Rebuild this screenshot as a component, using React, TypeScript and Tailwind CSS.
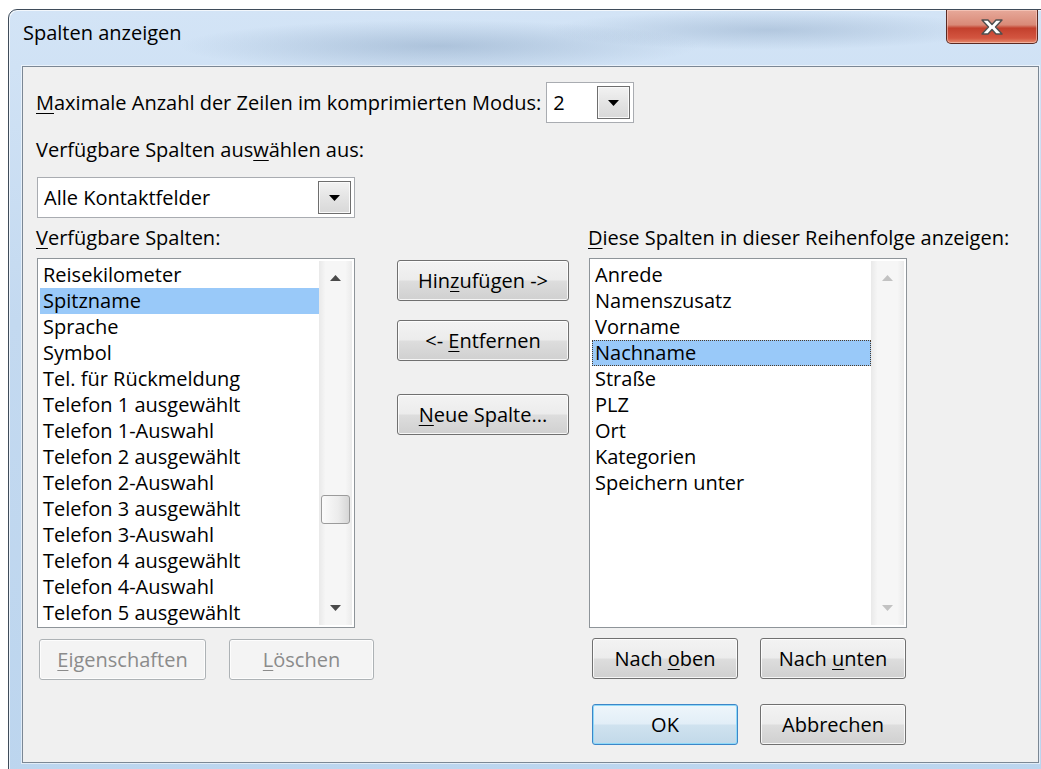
import type { ReactNode } from "react";

const availableColumns = [
  "Reisekilometer",
  "Spitzname",
  "Sprache",
  "Symbol",
  "Tel. für Rückmeldung",
  "Telefon 1 ausgewählt",
  "Telefon 1-Auswahl",
  "Telefon 2 ausgewählt",
  "Telefon 2-Auswahl",
  "Telefon 3 ausgewählt",
  "Telefon 3-Auswahl",
  "Telefon 4 ausgewählt",
  "Telefon 4-Auswahl",
  "Telefon 5 ausgewählt",
];

const shownColumns = [
  "Anrede",
  "Namenszusatz",
  "Vorname",
  "Nachname",
  "Straße",
  "PLZ",
  "Ort",
  "Kategorien",
  "Speichern unter",
];

// underlined access key letter
const Key = ({ children }: { children: ReactNode }) => (
  <span className="underline decoration-1 underline-offset-[3px]">{children}</span>
);

const Arrow = ({ down, color }: { down?: boolean; color: string }) => (
  <svg width="11" height="6" viewBox="0 0 11 6">
    <path d={down ? "M0 0 L11 0 L5.5 6 Z" : "M0 6 L5.5 0 L11 6 Z"} fill={color} />
  </svg>
);

type ButtonProps = {
  children: ReactNode;
  width: string;
  disabled?: boolean;
  isDefault?: boolean;
};

const DialogButton = ({ children, width, disabled, isDefault }: ButtonProps) => {
  let look =
    "border-[#707070] bg-[linear-gradient(180deg,#f3f3f3_0%,#ececec_48%,#dddddd_52%,#d0d0d0_100%)] text-black";
  if (disabled) look = "border-[#adb2b5] bg-[#f4f4f4] text-[#8b8b8b]";
  if (isDefault)
    look =
      "border-[#3c86c8] bg-[linear-gradient(180deg,#eef6fb_0%,#e2eef7_48%,#cfe2ef_52%,#c2d9e9_100%)] text-black";
  return (
    <button
      type="button"
      className={`h-[41px] ${width} ${look} flex items-center justify-center rounded-[3px] border leading-6 ${
        isDefault ? "shadow-[inset_0_0_0_1px_#8fd9f8]" : "shadow-[inset_0_0_0_1px_rgba(255,255,255,0.8)]"
      }`}
    >
      {children}
    </button>
  );
};

const ComboBox = ({ value, width }: { value: string; width: string }) => (
  <div className={`flex h-[41px] ${width} items-center justify-between border border-[#a9acb1] bg-white pl-[6px] pr-[3px]`}>
    <span className="leading-6">{value}</span>
    <span className="flex h-[33px] w-[33px] items-center justify-center border border-[#6e6e6e] bg-[linear-gradient(180deg,#f2f2f2_0%,#e4e4e4_50%,#d8d8d8_100%)] shadow-[inset_0_0_0_1px_#fafafa]">
      <Arrow down color="#000" />
    </span>
  </div>
);

const ScrollBar = ({ active }: { active?: boolean }) => {
  const arrowColor = active ? "#4a4a4a" : "#c2c2c2";
  return (
    <div className="flex w-[33px] flex-col bg-[linear-gradient(90deg,#e9e9e9_0%,#f6f6f6_20%,#f6f6f6_80%,#ebebeb_100%)]">
      <div className="flex h-[34px] items-center justify-center">
        <Arrow color={arrowColor} />
      </div>
      <div className="flex-1">
        {active && (
          <div className="mx-auto mt-[200px] h-[29px] w-[29px] rounded-[3px] border border-[#9b9b9b] bg-[linear-gradient(90deg,#fbfbfb_0%,#ececec_60%,#d6d6d6_100%)]" />
        )}
      </div>
      <div className="flex h-[34px] items-center justify-center">
        <Arrow down color={arrowColor} />
      </div>
    </div>
  );
};

type ListProps = {
  items: string[];
  selected: string;
  focused?: boolean;
  scrollable?: boolean;
};

const ListBox = ({ items, selected, focused, scrollable }: ListProps) => (
  <div className="flex h-[370px] w-[318px] border border-[#8e9499] bg-white pb-[2px] pl-[2px] pr-[2px] pt-[2px]">
    <ul className="min-w-0 flex-1 pt-px">
      {items.map((item) => (
        <li
          key={item}
          className={`h-[26px] whitespace-nowrap pl-[3px] leading-[26px] ${
            item === selected ? "bg-[#99c9f9]" : ""
          } ${item === selected && focused ? "outline-1 -outline-offset-1 outline-dotted outline-[#4a3a2a]" : ""}`}
        >
          {item}
        </li>
      ))}
    </ul>
    <ScrollBar active={scrollable} />
  </div>
);

const CloseGlyph = () => (
  <svg width="26" height="18" viewBox="0 0 26 18">
    <path
      d="M3 2 H9 L13 6.5 L17 2 H23 L16.5 9 L23 16 H17 L13 11.5 L9 16 H3 L9.5 9 Z"
      fill="#ffffff"
      stroke="#4f4f4f"
      strokeWidth="1.4"
      strokeLinejoin="round"
    />
  </svg>
);

export default function App() {
  return (
    <div className="h-[769px] w-[1041px] overflow-hidden bg-white pl-2 pt-[9px] font-['Segoe_UI','Open_Sans',sans-serif] text-[20px] text-black">
      <div className="flex h-[780px] w-[1045px] flex-col rounded-tl-[9px] rounded-tr-[9px] border border-[#3f4c5a] bg-[radial-gradient(ellipse_260px_26px_at_430px_36px,rgba(105,135,170,0.35),transparent),radial-gradient(ellipse_220px_20px_at_760px_20px,rgba(105,135,170,0.3),transparent),linear-gradient(180deg,#d3e4f6_0%,#c3d9f0_40%,#bcd5ee_100%)] shadow-[inset_1px_1px_0_rgba(255,255,255,0.7)]">
        {/* caption */}
        <div className="flex h-[56px] shrink-0 items-start justify-between pl-[14px]">
          <span className="mt-[11px] leading-6">Spalten anzeigen</span>
          <div className="mr-[14px] flex h-[34px] w-[92px] items-center justify-center rounded-b-[5px] border border-t-0 border-[#5b2a22] bg-[linear-gradient(180deg,#e7a99a_0%,#d98a78_45%,#c3402d_55%,#d35540_85%,#e58a6c_100%)] shadow-[inset_0_0_0_1px_rgba(255,220,210,0.5)]">
            <CloseGlyph />
          </div>
        </div>

        {/* client area */}
        <div className="ml-[13px] h-[697px] w-[1017px] shrink-0 border border-[#7b8794] bg-[#f0f0f0] pl-[13px] pt-[15px] shadow-[0_0_0_1px_rgba(255,255,255,0.55)]">
          <div className="flex items-center gap-[5px]">
            <span className="leading-6">
              <Key>M</Key>aximale Anzahl der Zeilen im komprimierten Modus:
            </span>
            <ComboBox value="2" width="w-[88px]" />
          </div>

          <div className="mt-[15px] leading-6">
            Verfügbare Spalten aus<Key>w</Key>ählen aus:
          </div>

          <div className="ml-px mt-[15px]">
            <ComboBox value="Alle Kontaktfelder" width="w-[318px]" />
          </div>

          <div className="mt-[8px] flex">
            {/* available columns */}
            <div className="flex w-[361px] flex-col">
              <span className="leading-6">
                <Key>V</Key>erfügbare Spalten:
              </span>
              <div className="ml-px mt-[8px]">
                <ListBox items={availableColumns} selected="Spitzname" scrollable />
              </div>
              <div className="ml-[3px] mt-[11px] flex gap-[23px]">
                <DialogButton width="w-[167px]" disabled>
                  <span>
                    <Key>E</Key>igenschaften
                  </span>
                </DialogButton>
                <DialogButton width="w-[145px]" disabled>
                  <span>
                    <Key>L</Key>öschen
                  </span>
                </DialogButton>
              </div>
            </div>

            {/* move buttons */}
            <div className="flex w-[191px] flex-col pt-[34px]">
              <DialogButton width="w-[172px]">
                <span>
                  Hin<Key>z</Key>ufügen -&gt;
                </span>
              </DialogButton>
              <div className="mt-[19px]">
                <DialogButton width="w-[172px]">
                  <span>
                    &lt;- <Key>E</Key>ntfernen
                  </span>
                </DialogButton>
              </div>
              <div className="mt-[33px]">
                <DialogButton width="w-[172px]">
                  <span>
                    <Key>N</Key>eue Spalte...
                  </span>
                </DialogButton>
              </div>
            </div>

            {/* shown columns */}
            <div className="flex flex-col">
              <span className="whitespace-nowrap leading-6">
                <Key>D</Key>iese Spalten in dieser Reihenfolge anzeigen:
              </span>
              <div className="ml-px mt-[8px]">
                <ListBox items={shownColumns} selected="Nachname" focused />
              </div>
              <div className="ml-[4px] mt-[10px] flex gap-[22px]">
                <DialogButton width="w-[146px]">
                  <span>
                    Nach <Key>o</Key>ben
                  </span>
                </DialogButton>
                <DialogButton width="w-[146px]">
                  <span>
                    Nach <Key>u</Key>nten
                  </span>
                </DialogButton>
              </div>
              <div className="ml-[4px] mt-[25px] flex gap-[22px]">
                <DialogButton width="w-[146px]" isDefault>
                  OK
                </DialogButton>
                <DialogButton width="w-[146px]">Abbrechen</DialogButton>
              </div>
            </div>
          </div>
        </div>
      </div>
    </div>
  );
}
